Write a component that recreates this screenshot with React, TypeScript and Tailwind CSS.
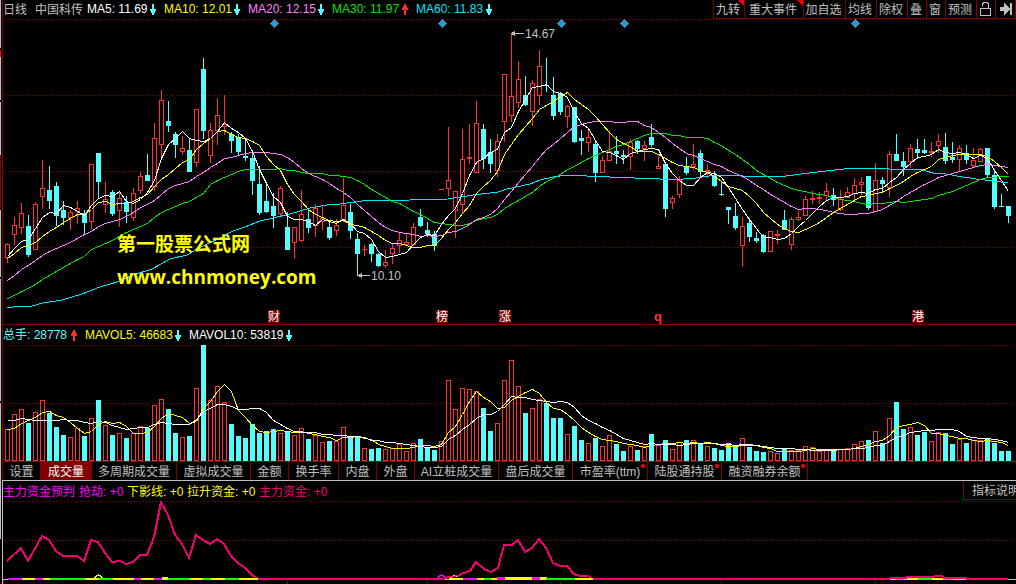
import { clsx } from 'clsx'

type Candle = {
  up: boolean
  high: number
  top: number
  bottom: number
  low: number
  volume: number
}

// u = rising, d = falling; then high, body top, body bottom, low, volume top
const RAW = `
u 243 244 258 263 429,u 217 225 235 245 414,u 203 213 228 234 409,d 215 226 255 257 423,u 202 204 250 250 412,u 160 188 197 209 400
d 166 190 201 209 413,d 182 186 216 226 427,d 201 210 218 225 435,u 210 212 218 230 437,u 201 208 212 224 428,d 210 213 223 234 436
u 164 164 222 229 418,d 153 153 182 199 400,u 182 199 205 213 425,d 190 192 214 216 435,u 192 198 211 227 433,d 196 202 212 223 438
u 188 193 218 221 433,u 172 176 191 194 426,d 154 175 181 181 428,u 123 138 187 191 405,u 90 100 145 160 399,d 101 121 126 132 409
d 132 134 145 158 433,u 136 148 152 155 437,d 138 150 172 172 436,u 109 109 163 167 388,d 58 69 131 139 345,u 123 130 156 163 400
u 98 115 131 145 386,u 95 124 127 135 402,d 132 134 141 153 424,d 134 137 152 156 436,d 138 156 158 161 438,d 152 158 181 195 424
d 166 184 213 215 433,d 185 201 212 213 431,d 193 206 216 228 429,u 186 188 214 216 433,d 212 227 250 250 431,u 227 227 243 259 435
u 190 214 241 242 428,d 209 219 228 233 439,u 204 208 226 237 435,u 206 218 222 230 442,d 222 227 238 240 441,u 219 225 231 236 441
u 178 205 220 222 427,d 204 212 231 239 436,d 233 239 254 276 437,u 245 249 250 256 448,d 243 244 254 262 449,d 253 254 266 267 448
u 250 262 266 268 449,u 243 248 254 264 448,u 232 240 246 253 444,u 234 242 245 245 451,u 223 227 245 246 443,d 209 217 226 227 439
d 222 230 234 237 448,d 231 234 246 251 450,u 189 189 190 190 441,u 127 180 189 196 380,u 191 191 211 238 409,u 129 159 205 213 388
u 124 157 159 164 389,u 101 123 173 173 391,d 124 129 159 169 408,d 139 152 164 173 431,u 134 141 171 177 423,u 74 74 122 142 380
u 33 96 116 122 360,u 61 79 103 108 386,d 76 95 105 106 413,u 80 83 112 126 408,u 50 66 96 105 399,d 58 85 86 92 403
d 77 95 116 120 418,d 92 93 112 115 418,u 105 106 117 128 434,d 107 107 142 143 426,d 130 138 141 155 440,u 130 137 143 152 443
d 141 144 173 182 438,u 156 160 173 173 446,u 130 151 161 161 435,d 136 151 154 164 444,d 150 155 157 164 451,u 139 142 157 170 446
d 140 141 149 154 450,u 141 145 149 161 446,d 124 137 145 147 434,u 156 166 169 169 445,d 163 164 209 217 440,u 196 198 203 209 449
u 176 180 195 198 442,d 157 166 173 175 440,u 144 164 167 170 440,d 150 153 172 178 443,u 164 170 172 178 446,d 171 175 186 187 448
d 182 194 195 196 450,d 207 207 210 224 443,d 203 216 228 230 445,u 217 226 246 267 438,d 218 223 237 242 447,d 232 238 241 243 451
d 234 235 252 253 452,u 231 231 252 252 451,u 230 234 236 244 453,d 210 220 230 230 449,u 217 219 245 250 450,u 211 217 220 221 450
u 196 199 216 216 446,u 191 198 200 204 447,u 192 197 199 204 451,u 183 191 196 200 450,d 188 195 200 206 449,u 190 199 210 211 449
u 187 192 198 198 448,u 178 185 194 202 444,u 177 182 185 195 441,d 176 176 208 210 440,u 163 180 212 212 431,d 177 180 184 192 443
u 151 154 188 197 418,d 134 154 161 161 402,d 152 161 167 176 429,u 144 148 162 168 427,d 139 149 153 159 435,d 139 150 153 154 432
u 142 151 153 157 441,u 134 141 146 153 432,d 133 147 161 164 433,d 142 157 160 163 444,u 145 148 160 171 439,d 145 153 160 164 443
u 148 160 166 168 440,u 148 149 162 162 440,d 148 148 175 177 438,d 169 175 207 209 443,d 194 206 207 207 451,d 206 206 216 223 451`

const candles: Candle[] = RAW.trim()
  .split(/[,\n]/)
  .map((row) => {
    const [kind, ...rest] = row.split(' ')
    const [high, top, bottom, low, volume] = rest.map(Number)
    return { up: kind === 'u', high, top, bottom, low, volume }
  })

const closes = candles.map((c) => (c.up ? c.top : c.bottom))
const volumes = candles.map((c) => c.volume)

const STEP = 7
const columnX = (i: number) => 7 + i * STEP

// lead holds the averages whose window starts before the first visible day
function averageLine(values: number[], size: number, lead: number[]) {
  return values
    .map((_, i) => {
      const window = values.slice(i - size + 1, i + 1)
      const y = i < size - 1 ? lead[i] : window.reduce((a, b) => a + b, 0) / size
      return `${columnX(i) + 0.5},${Math.round(y) + 0.5}`
    })
    .join(' ')
}

const MA5 = averageLine(closes, 5, [256, 248, 241, 239])
const MA10 = averageLine(closes, 10, [258, 253, 247, 245, 242, 236, 231, 227, 222])
const MA20 = averageLine(closes, 20, [
  280, 275, 269, 265, 260, 255, 251, 248, 245, 242, 238, 234, 231, 226, 223, 221, 219, 216, 212,
])
const MA30 = averageLine(closes, 30, [
  298, 295, 291, 288, 284, 279, 275, 271, 267, 263, 259, 256, 249, 246, 243, 240, 236, 232, 229,
  226, 223, 217, 212, 209, 206, 203, 201, 197, 193,
])
const MA60 =
  '7,308 20,306 32,306 43,303 62,300 82,294 100,287 117,282 133,275 152,269 170,259 187,255 203,246 220,238 233,231 245,227 260,221 273,218 290,214 310,208 327,205 340,204 362,201 410,200 448,199 473,195 498,192 507,189 530,184 540,180 553,177 567,175 587,176 610,177 660,179 673,180 696,178 709,176 726,175 743,176 786,176 809,173 826,171 853,168 876,168 889,169 919,169 933,173 946,174 963,177 976,179 993,181 1008,183'
const MAVOL5 = averageLine(volumes, 5, [429, 428, 423, 420])
const MAVOL10 = averageLine(volumes, 10, [420, 420, 418, 419, 420, 420, 420, 420, 419])

const MAIN_FORCE =
  '7,561 21,548 28,561 42,536 49,540 56,551 63,556 77,556 84,561 91,540 98,542 105,553 112,562 120,561 126,564 133,562 140,555 147,555 154,537 161,502 168,515 175,535 182,544 189,558 196,535 203,540 210,544 217,539 224,544 231,556 238,563 245,568 252,575 258,579 444,579 448,577 458,576 463,573 470,571 476,562 484,569 491,572 498,568 504,545 512,545 518,540 525,552 532,548 539,539 546,548 553,563 560,566 567,566 574,574 580,576 588,576 593,579 890,579 891,578 906,578 907,577 934,577 935,576 942,576 944,578 966,578 967,579 1008,579'

const M = '#ff00ff'
const Y = '#ffff00'
const G = '#00ff00'

// start x, end x, colour, top y
const STRIPS: [number, number, string, number][] = [
  [8, 22, M, 578], [22, 35, Y, 578], [35, 43, M, 578], [43, 50, Y, 578], [50, 85, G, 578],
  [85, 99, Y, 578], [99, 113, G, 578], [113, 134, Y, 578], [134, 141, M, 578], [141, 154, Y, 578],
  [154, 162, M, 578], [162, 168, Y, 577], [168, 190, G, 578], [190, 203, Y, 578], [203, 211, G, 578],
  [211, 225, Y, 578], [225, 239, G, 578], [239, 258, Y, 578], [449, 463, Y, 578], [463, 477, M, 578],
  [477, 484, Y, 578], [484, 491, G, 578], [491, 497, Y, 578], [497, 505, M, 577], [505, 532, Y, 577],
  [532, 540, M, 577], [540, 547, Y, 577], [546, 575, G, 578], [575, 593, Y, 578], [890, 896, Y, 579],
  [896, 904, G, 579], [907, 918, Y, 578], [918, 932, G, 578], [932, 943, Y, 578], [945, 953, G, 579],
  [953, 966, Y, 579],
]

const averages = [
  { label: 'MA5: 11.69', up: false, className: 'w-[77px] text-white' },
  { label: 'MA10: 12.01', up: false, className: 'w-[84px] text-[#ffff00]' },
  { label: 'MA20: 12.15', up: false, className: 'w-[84px] text-[#ff80ff]' },
  { label: 'MA30: 11.97', up: true, className: 'w-[84px] text-[#00e600]' },
  { label: 'MA60: 11.83', up: false, className: 'w-[84px] text-[#00e6ff]' },
]

const volumeStats = [
  { label: '总手: 28778', up: true, className: 'w-[82px] text-[#54ffff]' },
  { label: 'MAVOL5: 46683', up: false, className: 'w-[104px] text-[#ffff00]' },
  { label: 'MAVOL10: 53819', up: false, className: 'w-[111px] text-white' },
]

const tools = [
  { label: '九转', width: 'w-[31px]', corner: true },
  { label: '重大事件', width: 'w-[59px]', corner: true },
  { label: '加自选', width: 'w-[42px]' },
  { label: '均线', width: 'w-[31px]' },
  { label: '除权', width: 'w-[31px]' },
  { label: '叠', width: 'w-[19px]' },
  { label: '窗', width: 'w-[19px]' },
  { label: '预测', width: 'w-[31px]' },
]

const tabs = [
  { label: '设置', width: 'w-[38px]' },
  { label: '成交量', width: 'w-[51px]', active: true },
  { label: '多周期成交量', width: 'w-[85px]' },
  { label: '虚拟成交量', width: 'w-[74px]' },
  { label: '金额', width: 'w-[38px]' },
  { label: '换手率', width: 'w-[50px]' },
  { label: '内盘', width: 'w-[38px]' },
  { label: '外盘', width: 'w-[38px]' },
  { label: 'AI立桩成交量', width: 'w-[84px]' },
  { label: '盘后成交量', width: 'w-[74px]' },
  { label: '市盈率(ttm)', width: 'w-[75px]', dot: true },
  { label: '陆股通持股', width: 'w-[74px]', dot: true },
  { label: '融资融券余额', width: 'w-[86px]', dot: true },
]

const signals = [
  { label: '主力资金预判', className: 'w-[76px] text-[#ff00ff]' },
  { label: '抢劫: +0', className: 'w-[48px] text-[#ff00ff]' },
  { label: '下影线: +0', className: 'w-[60px] text-[#ffff00]' },
  { label: '拉升资金: +0', className: 'w-[72px] text-[#ffff00]' },
  { label: '主力资金: +0', className: 'w-[72px] text-[#f00070]' },
]

function TrendArrow({ up }: { up: boolean }) {
  return (
    <svg
      viewBox="0 0 6 11"
      className={clsx('h-[11px] w-[6px] shrink-0', up ? 'rotate-180 fill-[#ff3232]' : 'fill-[#54ffff]')}
      shapeRendering="crispEdges"
    >
      <path d="M2 0h2v5h2v2H5v2H4v2H2V9H1V7H0V5h2z" />
    </svg>
  )
}

function Stat({ label, up, className }: { label: string; up: boolean; className: string }) {
  return (
    <div className={clsx('flex h-[18px] shrink-0 items-center justify-between pr-2', className)}>
      <span>{label}</span>
      <TrendArrow up={up} />
    </div>
  )
}

function GridLines({ rows }: { rows: number[] }) {
  return (
    <g stroke="#900000" strokeDasharray="1 2">
      {rows.map((y) => (
        <line key={y} x1="5" x2="1016" y1={y + 0.5} y2={y + 0.5} />
      ))}
    </g>
  )
}

function CandleShape({ candle, x }: { candle: Candle; x: number }) {
  const { up, high, top, bottom, low } = candle
  if (!up) {
    return (
      <g fill="#54ffff">
        <rect x={x} y={high} width="1" height={low - high} />
        <rect x={x - 2} y={top} width="5" height={bottom - top} />
      </g>
    )
  }
  return (
    <g fill="#ff3232">
      <rect x={x} y={high} width="1" height={top - high} />
      <rect x={x} y={bottom} width="1" height={low - bottom} />
      {bottom - top < 3 ? (
        <rect x={x - 2} y={top} width="5" height={bottom - top} />
      ) : (
        <rect x={x - 1.5} y={top + 0.5} width="4" height={bottom - top - 1} fill="none" stroke="#ff3232" />
      )}
    </g>
  )
}

function EventBadge({ x, label }: { x: number; label: string }) {
  return (
    <g>
      <rect x={x} y="310" width="12" height="13" fill="#800000" />
      <text x={x + 6} y="321" textAnchor="middle" fontSize="12" fill="#ffffff">
        {label}
      </text>
    </g>
  )
}

function PriceChart() {
  return (
    <svg viewBox="3 19 1013 305" className="block h-auto w-full" shapeRendering="crispEdges">
      <GridLines rows={[19, 95, 171, 247]} />
      {[274, 442, 561, 624, 855].map((x) => (
        <path key={x} d={`M${x + 0.5} 19l4.5 4.5-4.5 4.5-4.5-4.5z`} fill="#2c99c8" />
      ))}
      {candles.map((candle, i) => (
        <CandleShape key={i} candle={candle} x={columnX(i)} />
      ))}
      <g fill="none" strokeWidth="1">
        <polyline points={MA60} stroke="#00e6ff" />
        <polyline points={MA30} stroke="#00e600" />
        <polyline points={MA20} stroke="#ff80ff" />
        <polyline points={MA10} stroke="#ffff00" />
        <polyline points={MA5} stroke="#ffffff" />
      </g>
      <g fill="#c0c0c0" fontSize="12">
        <path d="M511 33h1v-1h2v-1h1v2h9v1h-9v2h-1v-1h-2v-1h-1z" />
        <text x="525" y="38">14.67</text>
        <path d="M358 275h1v-1h2v-1h1v2h8v1h-8v2h-1v-1h-2v-1h-1z" />
        <text x="371" y="280">10.10</text>
      </g>
      <g
        fill="#ffff00"
        fontSize="19"
        fontWeight="700"
        className="font-['Open_Sans','Noto_Sans_CJK_SC',sans-serif]"
      >
        <text x="117" y="251">第一股票公式网</text>
        <text x="117" y="284">www.chnmoney.com</text>
      </g>
      <EventBadge x={268} label="财" />
      <EventBadge x={436} label="榜" />
      <EventBadge x={499} label="涨" />
      <text x="654" y="321" fontSize="13" fontWeight="700" fill="#ff3232">q</text>
      <EventBadge x={912} label="港" />
    </svg>
  )
}

function VolumeChart() {
  return (
    <svg viewBox="3 345 1013 116" className="block h-auto w-full" shapeRendering="crispEdges">
      <GridLines rows={[345, 403]} />
      {candles.map(({ up, volume }, i) =>
        up ? (
          <rect
            key={i}
            x={columnX(i) - 1.5}
            y={volume + 0.5}
            width="4"
            height={460 - volume}
            fill="none"
            stroke="#ff3232"
          />
        ) : (
          <rect key={i} x={columnX(i) - 2} y={volume} width="5" height={461 - volume} fill="#54ffff" />
        ),
      )}
      <polyline points={MAVOL5} fill="none" stroke="#ffff00" />
      <polyline points={MAVOL10} fill="none" stroke="#ffffff" />
    </svg>
  )
}

function SignalChart() {
  return (
    <svg viewBox="3 501 1013 83" className="block h-auto w-full" shapeRendering="crispEdges">
      <GridLines rows={[501, 540]} />
      <rect x="3" y="579" width="1013" height="1" fill="#c0c0c0" />
      <polyline points={MAIN_FORCE} fill="none" stroke="#f00070" strokeWidth="2" />
      {STRIPS.map(([x1, x2, color, y]) => (
        <rect key={x1} x={x1} y={y} width={x2 - x1} height={580 - y} fill={color} />
      ))}
      <g fill="none">
        <path d="M94.5 578l2-2 2-1 2 1 2 2" stroke="#ffff00" />
        <path d="M437.5 578l2-2 2-1 2 1 2 2" stroke="#ff00ff" />
        <path d="M451.5 578l3-3 4 3" stroke="#ffff00" strokeDasharray="1 2" />
      </g>
      {[3, 140, 287, 427, 560, 721, 875].map((x) => (
        <rect key={x} x={x} y="581" width="1" height="3" fill="#800000" />
      ))}
    </svg>
  )
}

function Toolbar() {
  return (
    <div className="flex h-[19px] shrink-0 border-r border-b border-[#800000] text-[#c0c0c0]">
      {tools.map(({ label, width, corner }) => (
        <button
          key={label}
          type="button"
          className={clsx(
            'relative flex justify-center border-l border-[#800000] pr-0.5 leading-5 whitespace-nowrap',
            width,
          )}
        >
          {label}
          {corner && (
            <svg viewBox="0 0 6 6" className="absolute top-0 right-0 h-1.5 w-1.5 fill-[#ff0000]">
              <path d="M0 0h6v6z" />
            </svg>
          )}
        </button>
      ))}
      <button
        type="button"
        aria-label="解锁"
        className="flex w-[19px] items-center justify-center border-l border-[#800000]"
      >
        <svg viewBox="0 0 12 14" className="h-[14px] w-3 fill-none stroke-current" shapeRendering="crispEdges">
          <path d="M.5 6.5h10v7H.5z" />
          <path d="M8.500 6V1.500h-1v-1h-4v1h-1v2" />
        </svg>
      </button>
      <button
        type="button"
        aria-label="收起"
        className="flex w-[20px] items-center justify-center border-l border-[#800000]"
      >
        <svg viewBox="0 0 12 12" className="h-3 w-3 fill-current" shapeRendering="crispEdges">
          <path d="M0 4h4V0l6 6-6 6V8H0zM10 0h2v12h-2z" />
        </svg>
      </button>
    </div>
  )
}

function Gutter() {
  return (
    <div className="flex w-0.5 shrink-0 flex-col pr-px">
      <div className="h-12 bg-[#c0c0c0]" />
      <div className="mt-0.5 h-[7px] bg-[#ff0000]" />
      <div className="h-[43px] bg-[#c0c0c0]" />
      <div className="mt-0.5 h-[53px] bg-[#c0c0c0]" />
      <div className="h-[54px] bg-[#800000]" />
      <div className="mt-px h-[67px] bg-[#c0c0c0]" />
      <div className="mt-0.5 h-[122px] bg-[#c0c0c0]" />
      <div className="mt-0.5 h-[136px] bg-[#c0c0c0]" />
    </div>
  )
}

export default function App() {
  return (
    <div className="flex min-h-screen overflow-hidden bg-black font-['Liberation_Sans','Noto_Sans_CJK_SC',sans-serif] text-[12px] leading-[18px] whitespace-nowrap">
      <Gutter />
      <main className="min-w-0 flex-1">
        <section className="border-b border-l border-[#800000]">
          <header className="flex h-[19px] justify-between">
            <div className="flex min-w-0 overflow-hidden">
              <span className="w-8 shrink-0 leading-5 text-[#c0c0c0]">日线</span>
              <h1 className="w-[52px] shrink-0 leading-5 text-[#c0c0c0]">中国科传</h1>
              {averages.map((item) => (
                <Stat key={item.label} {...item} />
              ))}
            </div>
            <Toolbar />
          </header>
          <PriceChart />
        </section>

        <section className="border-l border-[#800000]">
          <header className="flex h-5 items-center">
            {volumeStats.map((item) => (
              <Stat key={item.label} {...item} />
            ))}
          </header>
          <VolumeChart />
          <nav className="flex h-[19px] border-t border-[#800000] text-[#c0c0c0]">
            {tabs.map(({ label, width, active, dot }) => (
              <button
                key={label}
                type="button"
                className={clsx(
                  'relative flex shrink-0 justify-center border-r border-[#800000] leading-5',
                  width,
                  active && 'bg-[#800000] text-white',
                )}
              >
                {label}
                {dot && <span className="absolute top-0.5 right-0.5 h-1 w-1 rounded-full bg-[#ff0000]" />}
              </button>
            ))}
          </nav>
        </section>

        <section className="border-t border-l border-[#c0c0c0]">
          <header className="flex h-5 justify-between">
            <div className="flex min-w-0 overflow-hidden leading-[22px]">
              {signals.map(({ label, className }) => (
                <span key={label} className={clsx('shrink-0', className)}>
                  {label}
                </span>
              ))}
            </div>
            <button
              type="button"
              className="h-[19px] w-[53px] shrink-0 overflow-hidden border-b border-l border-[#800000] pl-2 text-left leading-5 text-[#c0c0c0]"
            >
              指标说明
            </button>
          </header>
          <SignalChart />
        </section>
      </main>
    </div>
  )
}
